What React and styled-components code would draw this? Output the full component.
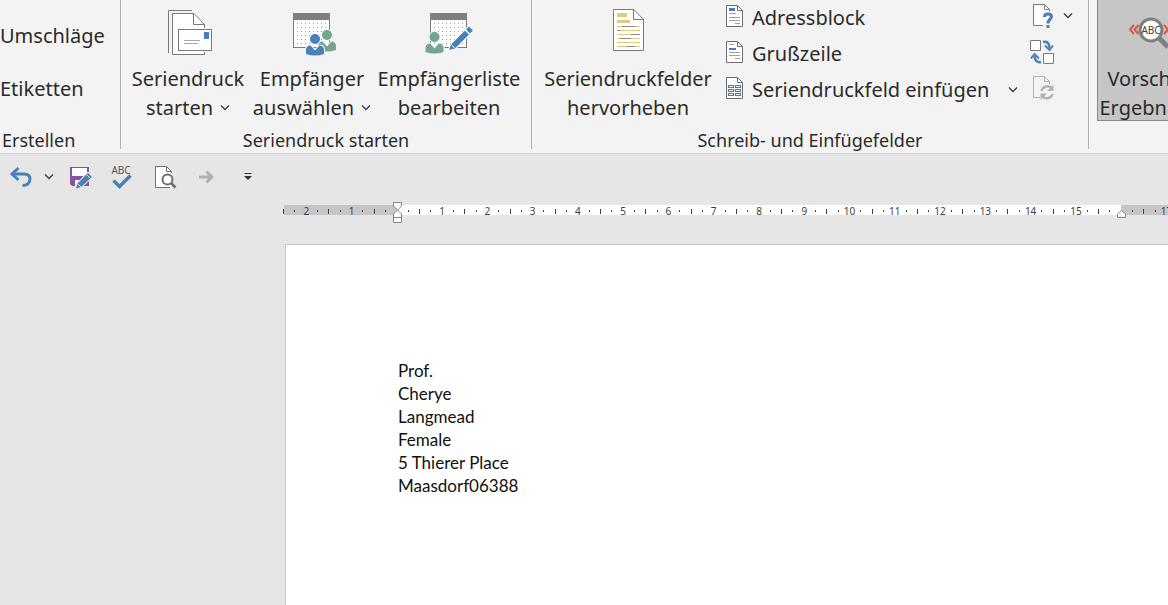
import React from "react";
import styled, { createGlobalStyle } from "styled-components";

const GREY = "#7a7a7a";
const BLUE = "#4a80b8";
const GREEN = "#74a592";
const GOLD = "#e5c780";
const PANEL = "#f3f3f3";

const GlobalStyle = createGlobalStyle`
  *, *::before, *::after { box-sizing: border-box; }
  body {
    margin: 0;
    background: #e6e6e6;
    color: #2b2b2b;
    font-family: "Noto Sans", "Open Sans", sans-serif;
    font-size: 20px;
  }
  svg { display: block; flex: none; }
`;

const Window = styled.div`
  display: flex;
  flex-direction: column;
  min-height: 100vh;
  overflow: hidden;
`;

const Ribbon = styled.header`
  display: flex;
  align-items: flex-start;
  background: ${PANEL};
  border-bottom: 1px solid #d0d0d0;
  white-space: nowrap;
  overflow: hidden;
`;

const Group = styled.section`
  display: flex;
  flex-direction: column;
  flex: none;
  width: ${(p) => p.$width}px;
`;

const GroupBody = styled.div`
  display: flex;
  align-items: flex-start;
  flex-direction: ${(p) => (p.$column ? "column" : "row")};
  height: 127px;
  padding: ${(p) => p.$pad || "0"};
`;

const GroupLabel = styled.h2`
  margin: 0;
  padding-left: ${(p) => (p.$start ? "2px" : "0")};
  font-size: 18px;
  font-weight: 400;
  line-height: 26px;
  text-align: ${(p) => (p.$start ? "left" : "center")};
`;

const Divider = styled.div`
  flex: none;
  width: 1px;
  height: 149px;
  background: #b0b0b0;
`;

const BaseButton = styled.button`
  display: flex;
  align-items: center;
  flex: none;
  margin: 0;
  padding: 0;
  border: 0;
  background: none;
  color: inherit;
  font: inherit;
`;

const TextButton = styled(BaseButton)`
  height: 53px;
`;

const LargeButton = styled(BaseButton)`
  flex-direction: column;
  gap: 8px;
  width: ${(p) => p.$width}px;
  height: 122px;
  padding-top: 8px;
  line-height: 29px;
`;

const PressedButton = styled(LargeButton)`
  height: 121px;
  margin-left: 8px;
  background: #c6c6c6;
  border: 1px solid #8a8a8a;
  border-top: 0;
`;

const Caption = styled.span`
  display: flex;
  flex-direction: column;
  align-items: center;
`;

const CaptionLine = styled.span`
  display: flex;
  align-items: center;
  gap: 7px;
`;

const FieldList = styled.div`
  display: flex;
  flex-direction: column;
  width: 300px;
  padding: 0 2px 0 6px;
`;

const FieldButton = styled(BaseButton)`
  gap: 9px;
  height: 36px;
  line-height: 35px;
  padding-bottom: 1px;
`;

const WideFieldButton = styled(FieldButton)`
  width: 100%;
`;

const FieldChevron = styled.span`
  margin-left: auto;
`;

const ToolList = styled.div`
  display: flex;
  flex-direction: column;
  padding-left: 9px;
`;

const ToolButton = styled(BaseButton)`
  gap: 8px;
  height: 36px;
  padding-bottom: 4px;
`;

const QuickBar = styled.nav`
  display: flex;
  align-items: center;
  height: 46px;
  padding-left: 9px;
`;

const QuickButton = styled(BaseButton)`
  justify-content: center;
  width: ${(p) => p.$width || 24}px;
  height: 28px;
  margin-right: ${(p) => p.$after || 0}px;
`;

const RulerRow = styled.div`
  height: 44px;
  padding: 5px 0 0 284px;
`;

const Ruler = styled.div`
  position: relative;
  height: 10px;
  background: linear-gradient(to right, #c6c6c6 113px, #ffffff 113px 837px, #c6c6c6 837px);
`;

const Marks = styled.div`
  display: grid;
  grid-template-columns: repeat(85, 1fr);
  grid-template-rows: 12px;
  width: 962px;
  margin-left: -6px;
`;

const Slot = styled.div`
  display: flex;
  align-items: center;
  justify-content: center;
  min-width: 0;
  color: #404040;
  font-size: 10px;
  line-height: 12px;
`;

const Tick = styled.i`
  width: 1px;
  height: ${(p) => (p.$half ? 5 : 2)}px;
  background: #404040;
`;

const IndentMarker = styled.svg`
  position: absolute;
  left: ${(p) => p.$left}px;
  top: ${(p) => p.$top}px;
`;

const Page = styled.article`
  flex: 1;
  margin-left: 285px;
  padding: 114px 40px 40px 112px;
  background: #ffffff;
  border: 1px solid #c6c6c6;
  border-right: 0;
  border-bottom: 0;
  color: #111111;
  font-family: Lato, sans-serif;
  font-size: 17px;
  line-height: 23px;
`;

const Paragraph = styled.p`
  margin: 0;
`;

const Chevron = () => (
  <svg width="10" height="8" viewBox="0 0 10 8" fill="none" stroke="#404040" strokeWidth="1.4">
    <path d="M1 1.5L5 5.5L9 1.5" />
  </svg>
);

const Dots = () => {
  const dots = [];
  for (let y = 15; y < 39; y += 4) {
    for (let x = 9; x < 40; x += 4) dots.push(<rect key={`${x}-${y}`} x={x} y={y} width="1" height="1" />);
  }
  return <g fill="#a0a0a0">{dots}</g>;
};

const Calendar = () => (
  <>
    <rect x="5.5" y="5.5" width="36" height="34" fill="#fff" stroke={GREY} />
    <rect x="5" y="5" width="37" height="7" fill="#7f7f7f" />
    <Dots />
  </>
);

const Person = ({ x, y, color }) => (
  <g transform={`translate(${x} ${y})`}>
    <path
      d="M-9 15V11C-9 8 -7 6.500 -4.500 6.500L0 11.500L4.500 6.500C7 6.500 9 8 9 11V15Q0 18 -9 15Z"
      fill={color}
      stroke={PANEL}
      strokeWidth="2"
      paintOrder="stroke"
    />
    <circle r="5" fill={color} stroke={PANEL} strokeWidth="2" paintOrder="stroke" />
  </g>
);

const MergeIcon = () => (
  <svg width="48" height="48" viewBox="0 0 48 48" fill="none" stroke={GREY}>
    <path d="M28 2.500H4.500V45" />
    <path d="M8.500 5.500H30L40.500 16V46.500H8.500Z" fill="#fff" stroke="none" />
    <path d="M40.500 20V16.500L30 5.500H8.500V46.500H40.500V44M29.500 5.500V16.500H40.500" />
    <rect x="14.500" y="21.500" width="33" height="21" fill="#fff" />
    <rect x="40" y="24" width="5" height="7" fill={BLUE} stroke="none" />
    <path d="M20 32.500H36M20 35.500H34" stroke="#a6a6a6" />
  </svg>
);

const RecipientsIcon = () => (
  <svg width="48" height="48" viewBox="0 0 48 48">
    <Calendar />
    <Person x={39} y={27} color={GREEN} />
    <Person x={27} y={31} color={BLUE} />
  </svg>
);

const EditListIcon = () => (
  <svg width="48" height="48" viewBox="0 0 48 48">
    <Calendar />
    <Person x={9.5} y={29} color={GREEN} />
    <g fill={BLUE} stroke="#fff" strokeWidth="2" paintOrder="stroke">
      <path d="M24 42L26 36.500L40 22.500L44 26.500L30 40.500Z" />
      <path d="M41 21.500L44 18.500L48 22.500L45 25.500Z" />
    </g>
    <path d="M26.500 36.500L29.500 40" stroke="#fff" />
  </svg>
);

const HighlightIcon = () => (
  <svg width="48" height="48" viewBox="0 0 48 48" fill="none">
    <path d="M9.500 1.500H30L39.500 11.500V42.500H9.500Z" fill="#fff" stroke={GREY} />
    <path d="M29.500 1.500V11.500H39.500" stroke={GREY} />
    <path d="M13 5H23V9H13ZM13 12H26V15H13Z" fill={GOLD} />
    <path d="M13 18.500H36M13 22.500H36M13 26.500H36M13 30.500H36M13 34.500H36M13 38.500H36" stroke={GOLD} />
    <path d="M18 18.500H31M13 22.500H16M27 26.500H36M16 30.500H27M22 38.500H31" stroke="#8c8c8c" />
  </svg>
);

const PageSvg = styled.svg`
  margin-bottom: 3px;
`;

const SmallPage = ({ children }) => (
  <PageSvg width="17" height="22" viewBox="0 0 17 22" fill="none">
    <path d="M.5 .5H11.500L16.500 5.500V21.500H.5Z" fill="#fff" stroke="#6e6e6e" />
    <path d="M11.500 .5V5.500H16.500" stroke="#6e6e6e" />
    {children}
  </PageSvg>
);

const AddressIcon = () => (
  <SmallPage>
    <rect x="3" y="3" width="6" height="3" fill={BLUE} />
    <path d="M3 8.500H10M3 12.500H14M3 15.500H14M9 18.500H14" stroke="#a0a0a0" />
  </SmallPage>
);

const GreetingIcon = () => (
  <SmallPage>
    <rect x="3" y="7" width="7" height="2" fill={BLUE} />
    <path d="M3 3.500H8M3 11.500H14M3 14.500H14M9 17.500H14" stroke="#a0a0a0" />
  </SmallPage>
);

const FieldIcon = () => (
  <SmallPage>
    <path
      d="M2.500 8.500H7.500V10.500H2.500ZM9.500 8.500H14.500V10.500H9.500ZM2.500 12.500H7.500V14.500H2.500ZM9.500 12.500H14.500V14.500H9.500ZM2.500 16.500H7.500V18.500H2.500ZM9.500 16.500H14.500V18.500H9.500Z"
      stroke="#3a82bf"
      strokeWidth="1.200"
    />
  </SmallPage>
);

const RulesIcon = () => (
  <svg width="26" height="26" viewBox="0 0 26 26" fill="none">
    <path d="M4.500 1.500H15.500L20.500 6.500V22.500H4.500Z" fill="#fff" />
    <path d="M20.500 9V6.500L15.500 1.500H4.500V22.500H14M15.500 1.500V6.500H20.500" stroke={GREY} />
    <path
      d="M15.500 14C15.500 11.500 17 10.500 19 10.500C21.500 10.500 22.500 12 22.500 13.500C22.500 16 19 16.500 19 20"
      stroke={PANEL}
      strokeWidth="5"
    />
    <path
      d="M15.500 14C15.500 11.500 17 11 19 11C21.500 11 22.500 12 22.500 13.500C22.500 16 19 16.500 19 20.500"
      stroke={BLUE}
      strokeWidth="3"
    />
    <rect x="17.500" y="22" width="3" height="3" fill={BLUE} />
  </svg>
);

const MatchIcon = () => (
  <svg width="26" height="26" viewBox="0 0 26 26" fill="none">
    <path d="M1.500 1.500H11.500V11.500H1.500ZM14.500 14.500H24.500V24.500H14.500Z" fill="#fff" stroke={GREY} />
    <path d="M14 3C18 2 20.500 4 20.500 9M12 23C8 24 5.500 21 5.500 17" stroke={BLUE} strokeWidth="2.500" />
    <path d="M16 6.500L20.500 11L24 6.500M2 19.500L5.500 15L10 19.500" stroke={BLUE} strokeWidth="2" />
  </svg>
);

const RefreshIcon = () => (
  <svg width="26" height="26" viewBox="0 0 26 26" fill="none">
    <path d="M20.500 9V6.500L15.500 1.500H4.500V22.500H11M15.500 1.500V6.500H20.500" stroke="#b4b4b4" />
    <g stroke="#b4b4b4" strokeWidth="2.500">
      <path d="M12.500 16A6 6 0 0 1 23 13.500M23.500 19A6 6 0 0 1 13 21" />
    </g>
    <path d="M24.500 9.500V16H18ZM11.500 25V18.500H18Z" fill="#b4b4b4" />
  </svg>
);

const PreviewIcon = () => (
  <svg width="56" height="48" viewBox="0 0 56 48" fill="none">
    <path d="M11 17L7 21.500L11 26M15.500 17L11.500 21.500L15.500 26" stroke="#d9593d" strokeWidth="2" />
    <path d="M41 17L45 21.500L41 26M45.500 17L49.500 21.500L45.500 26" stroke="#d9593d" strokeWidth="2" />
    <path d="M35 29L45 39" stroke="#7f7f7f" strokeWidth="5" />
    <circle cx="28" cy="22" r="11" fill="#fff" stroke="#7f7f7f" strokeWidth="3" />
    <text x="28" y="25.500" fontSize="10" textAnchor="middle" fill="#404040">
      ABC
    </text>
  </svg>
);

const UndoIcon = () => (
  <svg width="24" height="24" viewBox="0 0 24 24" fill="none" stroke={BLUE} strokeWidth="3">
    <path d="M3 9H15C19 9 21 11 21 14C21 18 18 20.500 13.500 20.500" />
    <path d="M9.500 3L3 9L9.500 15" />
  </svg>
);

const SaveIcon = () => (
  <svg width="24" height="24" viewBox="0 0 24 24" fill="none">
    <path d="M2 2H21V21H4L2 19Z" fill="#8950a4" />
    <path d="M4 3H19V11H4Z" fill="#fff" />
    <path d="M7 15H15V21H7Z" fill="#fff" />
    <path d="M9 17H11V21H9Z" fill="#8950a4" />
    <path d="M8 23.500L9.500 18.500L20 8L24 12L13 22Z" fill={BLUE} stroke="#e6e6e6" paintOrder="stroke" strokeWidth="2" />
    <path d="M18.500 9.500L22.500 13.500M9.500 18.500L13 22" stroke="#e6e6e6" />
  </svg>
);

const SpellIcon = () => (
  <svg width="24" height="28" viewBox="0 0 24 28" fill="none">
    <text x="12" y="11" fontSize="10" textAnchor="middle" fill="#555555">
      ABC
    </text>
    <path d="M4.500 17.500L10.500 23.500L21.500 12.500" stroke={BLUE} strokeWidth="3.500" />
  </svg>
);

const InspectIcon = () => (
  <svg width="24" height="24" viewBox="0 0 24 24" fill="none" stroke="#6e6e6e">
    <path d="M2.500 1.500H13.500L18.500 6.500V22.500H2.500Z" fill="#fff" stroke="none" />
    <path d="M18.500 8V6.500L13.500 1.500H2.500V22.500H17M13.500 1.500V6.500H18.500" />
    <circle cx="14.500" cy="14.500" r="5" fill="#fff" strokeWidth="2" />
    <path d="M18 18L22.500 22.500" strokeWidth="2.500" />
  </svg>
);

const NextIcon = () => (
  <svg width="16" height="14" viewBox="0 0 16 14" fill="none" stroke="#b0b0b0" strokeWidth="3">
    <path d="M1 7H14M8.500 1.500L14 7L8.500 12.500" />
  </svg>
);

const CustomizeIcon = () => (
  <svg width="8" height="8" viewBox="0 0 8 8" fill="#333333">
    <path d="M0.500 0H7.500V1H0.500ZM0 3H8L4 7Z" />
  </svg>
);

// Quarter-centimetre positions across an A4 sheet, counted from the left text edge.
const quarters = Array.from({ length: 85 }, (_, i) => i - 10);

const rulerMark = (quarter) => {
  if (quarter === 0 || quarter === 64) return null;
  if (quarter % 4 === 0) return Math.abs(quarter / 4);
  return <Tick $half={quarter % 2 === 0} />;
};

const lines = ["Prof.", "Cherye", "Langmead", "Female", "5 Thierer Place", "Maasdorf06388"];

const Large = ({ icon, first, second, width, menu, as: Button = LargeButton }) => (
  <Button type="button" $width={width}>
    {icon}
    <Caption>
      <CaptionLine>{first}</CaptionLine>
      <CaptionLine>
        {second}
        {menu && <Chevron />}
      </CaptionLine>
    </Caption>
  </Button>
);

export default function App() {
  return (
    <Window>
      <GlobalStyle />
      <Ribbon>
        <Group $width={120}>
          <GroupBody $column $pad="9px 0 0">
            <TextButton type="button">Umschläge</TextButton>
            <TextButton type="button">Etiketten</TextButton>
          </GroupBody>
          <GroupLabel $start>Erstellen</GroupLabel>
        </Group>
        <Divider />
        <Group $width={410}>
          <GroupBody $pad="0 0 0 5px">
            <Large width={124} icon={<MergeIcon />} first="Seriendruck" second="starten" menu />
            <Large width={124} icon={<RecipientsIcon />} first="Empfänger" second="auswählen" menu />
            <Large width={150} icon={<EditListIcon />} first="Empfängerliste" second="bearbeiten" />
          </GroupBody>
          <GroupLabel>Seriendruck starten</GroupLabel>
        </Group>
        <Divider />
        <Group $width={556}>
          <GroupBody $pad="0 0 0 4px">
            <Large width={184} icon={<HighlightIcon />} first="Seriendruckfelder" second="hervorheben" />
            <FieldList>
              <FieldButton type="button">
                <AddressIcon />
                Adressblock
              </FieldButton>
              <FieldButton type="button">
                <GreetingIcon />
                Grußzeile
              </FieldButton>
              <WideFieldButton type="button">
                <FieldIcon />
                Seriendruckfeld einfügen
                <FieldChevron>
                  <Chevron />
                </FieldChevron>
              </WideFieldButton>
            </FieldList>
            <ToolList>
              <ToolButton type="button" aria-label="Regeln">
                <RulesIcon />
                <Chevron />
              </ToolButton>
              <ToolButton type="button" aria-label="Felder zuordnen">
                <MatchIcon />
              </ToolButton>
              <ToolButton type="button" aria-label="Etiketten aktualisieren" disabled>
                <RefreshIcon />
              </ToolButton>
            </ToolList>
          </GroupBody>
          <GroupLabel>Schreib- und Einfügefelder</GroupLabel>
        </Group>
        <Divider />
        <Large as={PressedButton} width={108} icon={<PreviewIcon />} first="Vorschau" second="Ergebnisse" />
      </Ribbon>

      <QuickBar aria-label="Schnellzugriff">
        <QuickButton type="button" aria-label="Rückgängig" $after={8}>
          <UndoIcon />
        </QuickButton>
        <QuickButton type="button" aria-label="Rückgängig-Liste" $width={16} $after={11}>
          <Chevron />
        </QuickButton>
        <QuickButton type="button" aria-label="Speichern" $after={17}>
          <SaveIcon />
        </QuickButton>
        <QuickButton type="button" aria-label="Rechtschreibung" $after={20}>
          <SpellIcon />
        </QuickButton>
        <QuickButton type="button" aria-label="Seitenansicht" $after={17}>
          <InspectIcon />
        </QuickButton>
        <QuickButton type="button" aria-label="Weiter" disabled $after={18}>
          <NextIcon />
        </QuickButton>
        <QuickButton type="button" aria-label="Anpassen">
          <CustomizeIcon />
        </QuickButton>
      </QuickBar>

      <RulerRow>
        <Ruler>
          <Marks>
            {quarters.map((quarter) => (
              <Slot key={quarter}>{rulerMark(quarter)}</Slot>
            ))}
          </Marks>
          <IndentMarker $left={109} $top={-3} width="9" height="22" viewBox="0 0 9 22" fill="#fff" stroke="#858585">
            <path d="M.5 .5H8.500V4L4.500 8L.5 4Z" />
            <path d="M4.500 8L8.500 12V15.500H.5V12Z" />
            <path d="M.5 15.500H8.500V20.500H.5Z" />
          </IndentMarker>
          <IndentMarker $left={833} $top={5} width="9" height="8" viewBox="0 0 9 8" fill="#fff" stroke="#858585">
            <path d="M4.500 .5L8.500 4V7.500H.5V4Z" />
          </IndentMarker>
        </Ruler>
      </RulerRow>

      <Page>
        {lines.map((line) => (
          <Paragraph key={line}>{line}</Paragraph>
        ))}
      </Page>
    </Window>
  );
}
